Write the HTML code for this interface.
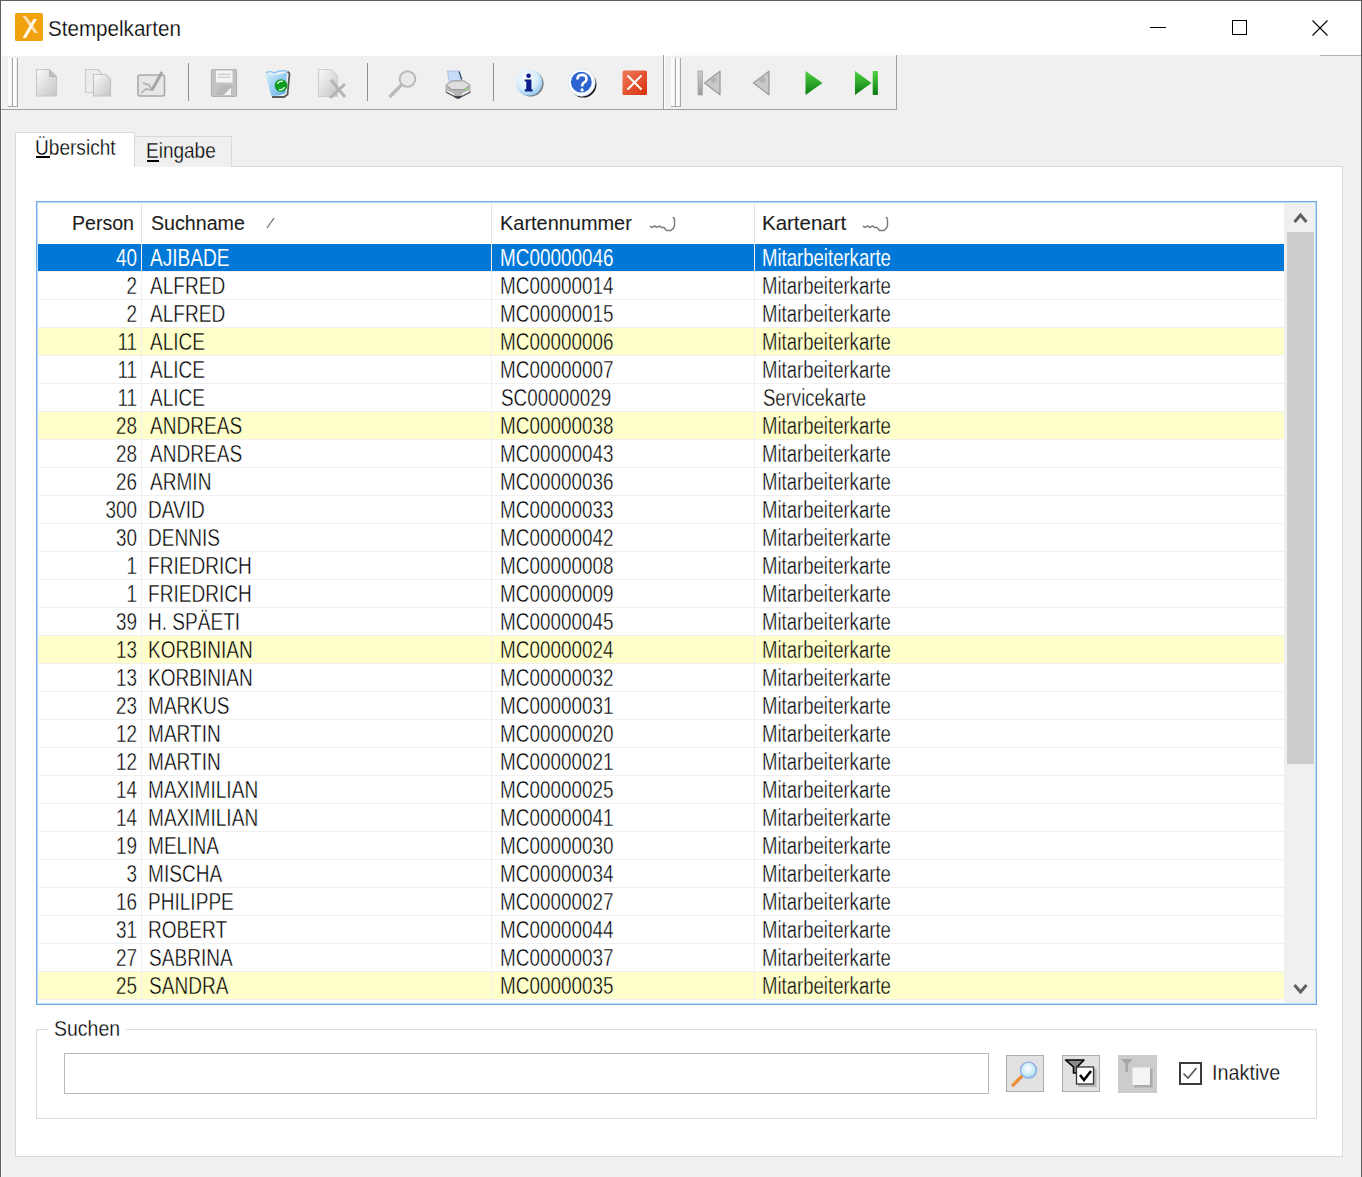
<!DOCTYPE html>
<html><head><meta charset="utf-8"><title>Stempelkarten</title>
<style>
html,body{margin:0;padding:0}
body{width:1362px;height:1177px;overflow:hidden;position:relative;background:#f0f0f0;font-family:"Liberation Sans",sans-serif}
.r{position:absolute;display:block}
.t{position:absolute;white-space:nowrap;line-height:1;}
</style></head><body>
<div class="r" style="left:0px;top:0px;width:1362px;height:1px;background:#5f5f5f"></div>
<div class="r" style="left:0px;top:0px;width:1px;height:1177px;background:#5f5f5f"></div>
<div class="r" style="left:1361px;top:0px;width:1px;height:1177px;background:#5f5f5f"></div>
<div class="r" style="left:1px;top:1px;width:1360px;height:54px;background:#fff"></div>
<div class="r" style="left:1px;top:55px;width:1px;height:1122px;background:#fafafa"></div>
<svg class="r" style="left:15px;top:13px" width="29" height="29" viewBox="0 0 29 29">
<rect x="0" y="0" width="28" height="28" rx="1.5" fill="#f0a30f"/>
<path d="M7.5 3 L11 3 L23 20 L19.5 20 Z" fill="#fce0b4"/>
<path d="M18.5 6 L22 6 L11 25 L7.5 25 Z" fill="#fff7ec"/>
</svg>
<div class="t" style="left:47.57px;top:18.26px;font-size:22.61px;font-weight:normal;color:#000;transform:scaleX(0.9112);transform-origin:0 0;-webkit-text-stroke:0.25px #fff">Stempelkarten</div>
<div class="r" style="left:1150px;top:27px;width:16px;height:1px;background:#000"></div>
<div class="r" style="left:1232px;top:20px;width:15px;height:15px;border:1px solid #000;box-sizing:border-box"></div>
<svg class="r" style="left:1311px;top:19px" width="18" height="18" viewBox="0 0 18 18">
<path d="M1.5 1.5 L16.5 16.5 M16.5 1.5 L1.5 16.5" stroke="#000" stroke-width="1.1"/></svg>
<div class="r" style="left:1px;top:55px;width:1360px;height:1px;background:#f0f0f0"></div>
<div class="r" style="left:1320px;top:55px;width:41px;height:1px;background:#b4b4b4"></div>
<div class="r" style="left:1px;top:55px;width:662px;height:1px;background:#fff"></div>
<div class="r" style="left:665px;top:55px;width:231px;height:1px;background:#fafafa"></div>
<div class="r" style="left:2px;top:108px;width:661px;height:1px;background:#f0f0f0"></div>
<div class="r" style="left:1px;top:109px;width:896px;height:1px;background:#a0a0a0"></div>
<div class="r" style="left:663px;top:55px;width:1px;height:55px;background:#a0a0a0"></div>
<div class="r" style="left:664px;top:55px;width:1px;height:54px;background:#fff"></div>
<div class="r" style="left:896px;top:55px;width:1px;height:55px;background:#a0a0a0"></div>
<div class="r" style="left:8px;top:58px;width:3px;height:48px;background:#fbfbfb"></div>
<div class="r" style="left:12px;top:58px;width:1px;height:49px;background:#a8a8a8"></div>
<div class="r" style="left:13px;top:58px;width:3px;height:48px;background:#fdfdfd"></div>
<div class="r" style="left:17px;top:58px;width:1px;height:49px;background:#a8a8a8"></div>
<div class="r" style="left:8px;top:106px;width:10px;height:1px;background:#a8a8a8"></div>
<div class="r" style="left:671px;top:58px;width:3px;height:48px;background:#fbfbfb"></div>
<div class="r" style="left:675px;top:58px;width:1px;height:49px;background:#a8a8a8"></div>
<div class="r" style="left:676px;top:58px;width:3px;height:48px;background:#fdfdfd"></div>
<div class="r" style="left:680px;top:58px;width:1px;height:49px;background:#a8a8a8"></div>
<div class="r" style="left:671px;top:106px;width:10px;height:1px;background:#a8a8a8"></div>
<div class="r" style="left:188px;top:63px;width:1px;height:38px;background:#8f8f8f"></div>
<div class="r" style="left:367px;top:63px;width:1px;height:38px;background:#8f8f8f"></div>
<div class="r" style="left:493px;top:63px;width:1px;height:38px;background:#8f8f8f"></div>

<svg class="r" style="left:30px;top:64px" width="630" height="38" viewBox="30 64 630 38">
<defs>
<linearGradient id="gpage" x1="0" y1="0" x2="1" y2="1"><stop offset="0" stop-color="#fafafa"/><stop offset="1" stop-color="#c4c4c4"/></linearGradient>
<linearGradient id="gbin" x1="0" y1="0" x2="1" y2="1"><stop offset="0" stop-color="#d8f4fb"/><stop offset="1" stop-color="#5aa8ea"/></linearGradient>
<radialGradient id="ginfo" cx="0.4" cy="0.35" r="0.7"><stop offset="0" stop-color="#ffffff"/><stop offset="0.6" stop-color="#d6ecfb"/><stop offset="1" stop-color="#8cc2ea"/></radialGradient>
<linearGradient id="gred" x1="0" y1="0" x2="1" y2="1"><stop offset="0" stop-color="#f07a5a"/><stop offset="1" stop-color="#d8300c"/></linearGradient>
</defs>
<!-- new doc -->
<path d="M36.5 69.5 H49.5 L56.5 76.5 V96 H36.5 Z" fill="url(#gpage)" stroke="#c8c8c8" stroke-width="1.2"/>
<path d="M49.5 69.5 V76.5 H56.5" fill="#bdbdbd" stroke="#b5b5b5" stroke-width="1"/>
<!-- copy -->
<path d="M85.5 69.5 H98 L101 72.5 V92.5 H85.5 Z" fill="#ececec" stroke="#cdcdcd" stroke-width="1.2"/>
<path d="M93.5 74.5 H106 L110.5 79 V96 H93.5 Z" fill="url(#gpage)" stroke="#c3c3c3" stroke-width="1.2"/>
<!-- edit -->
<rect x="138" y="75" width="26.5" height="21" rx="2" fill="#e6e6e6" stroke="#a9a9a9" stroke-width="1.6"/>
<path d="M141 93 L146 89 L152 90 L149 85 L143 83" fill="none" stroke="#aaaaaa" stroke-width="1.4"/>
<path d="M152 90 L162 72" stroke="#a5a5a5" stroke-width="3"/>
<!-- floppy -->
<path d="M213.5 69.5 H235 Q236.5 69.5 236.5 71 V95 Q236.5 96.5 235 96.5 H213.5 Q211.5 96.5 211.5 94.5 V71.5 Q211.5 69.5 213.5 69.5 Z" fill="#c3c3c3" stroke="#b2b2b2" stroke-width="1.2"/>
<rect x="216" y="70.5" width="16.5" height="12" fill="#f5f5f5"/>
<rect x="218" y="73.5" width="12.5" height="1.6" fill="#cfcfcf"/>
<rect x="218" y="76.5" width="12.5" height="1.6" fill="#d6d6d6"/>
<path d="M215 95 L222 85 H232 V95 Z" fill="#b9b9b9"/>
<path d="M224 95 L231 87.5 V95 Z" fill="#f7f7f7"/>
<!-- recycle bin -->
<path d="M265.5 73 Q276 77.5 287 72 L285.5 93 Q280 96.5 271 95.5 Z" fill="url(#gbin)"/>
<path d="M266 73 Q270 70 274 73 Q280 70 287 71" fill="none" stroke="#8cc8f5" stroke-width="1.6"/>
<path d="M287.5 71.5 L289.5 73.5 L287.5 94.5 L284 97 L272 97" fill="none" stroke="#5a5a5a" stroke-width="1.8"/>
<circle cx="281" cy="85.5" r="6.3" fill="#0e9b22"/>
<path d="M277.5 84 Q279 80.5 283 81.5 M284.5 87 Q283 90.5 279 89.5" fill="none" stroke="#d8f6d8" stroke-width="1.3"/>
<!-- delete doc -->
<path d="M318.5 69.5 H331 L337.5 76 V96.5 H318.5 Z" fill="url(#gpage)" stroke="#cfcfcf" stroke-width="1.2"/>
<path d="M331 80 L345 97 M345 84 L330 98" stroke="#b5b5b5" stroke-width="3"/>
<!-- magnifier -->
<circle cx="407.5" cy="79" r="7.8" fill="#e9e9e9" stroke="#b9b9b9" stroke-width="2"/>
<path d="M401 85.5 L390.5 96" stroke="#b9b9b9" stroke-width="3.5" stroke-linecap="round"/>
<!-- printer -->
<path d="M447.5 71 H459 L461.5 80 L449 81.5 Z" fill="#c4dcf6" stroke="#aab8e0" stroke-width="0.8"/>
<path d="M459 71.5 L461.8 79.5" stroke="#334466" stroke-width="1.2"/>
<path d="M445.5 85 L452 80.5 H464 L470.5 85 V92 L458 98.5 L445.5 92 Z" fill="#b4b4b4"/>
<path d="M446 85 L452 81 H464 L470 85 L464 89.5 H452 Z" fill="#dedede" stroke="#8e8e8e" stroke-width="0.8"/>
<path d="M447 91 L454 94.5 M462 94.5 L469 91" stroke="#f4f4f4" stroke-width="1.6"/>
<path d="M446 92 L458 98.5 L470.5 92" fill="none" stroke="#555" stroke-width="1.4"/>
<path d="M455 97 L461 97" stroke="#2a3440" stroke-width="1.6"/>
<rect x="465" y="88" width="2.5" height="2" fill="#8fd66a"/>
<!-- info -->
<circle cx="530.6" cy="83.6" r="13" fill="#4a4a4a" opacity="0.75"/>
<circle cx="529.2" cy="82.6" r="13.2" fill="url(#ginfo)"/>
<circle cx="528.6" cy="75.8" r="2.3" fill="#0c1f8a"/>
<path d="M524.6 79.4 H531.4 V89.2 H532.6 V91.4 H524.8 V89.2 H526.3 V81.6 H524.6 Z" fill="#0c1f8a"/>
<!-- help -->
<circle cx="583.2" cy="84.4" r="13.2" fill="#1a1a1a"/>
<circle cx="581.6" cy="82.6" r="13.6" fill="#f7fbff" stroke="#d6e3f3" stroke-width="0.8"/>
<circle cx="581.3" cy="82.2" r="10.4" fill="#2c63cf"/>
<path d="M577.4 79.6 Q577.4 74.9 581.9 74.9 Q586.5 74.9 586.5 78.9 Q586.5 81.3 583.6 82.9 Q582.1 83.8 582.1 86.6" fill="none" stroke="#fff" stroke-width="2.6"/>
<circle cx="582.1" cy="89.9" r="1.6" fill="#fff"/>
<!-- close -->
<rect x="622.5" y="70.5" width="24.5" height="24.5" rx="1.5" fill="url(#gred)"/>
<path d="M627.5 75.5 L641.5 89.5 M641.5 75.5 L627.5 89.5" stroke="#fff" stroke-width="2"/>
</svg>
<svg class="r" style="left:690px;top:64px" width="200" height="38" viewBox="690 64 200 38">
<defs>
<linearGradient id="ggr" x1="0" y1="0" x2="0" y2="1"><stop offset="0" stop-color="#d0d0d0"/><stop offset="1" stop-color="#9a9a9a"/></linearGradient>
<linearGradient id="ggn" x1="0" y1="0" x2="0" y2="1"><stop offset="0" stop-color="#4fd23f"/><stop offset="1" stop-color="#0a7a12"/></linearGradient>
</defs>
<rect x="698" y="71" width="4.5" height="24" fill="url(#ggr)" stroke="#a8a8a8" stroke-width="0.8"/>
<path d="M720 71.2 V94.8 L704.5 83 Z" fill="#c9c9c9" stroke="#9c9c9c" stroke-width="1.3" stroke-linejoin="round"/>
<circle cx="713.5" cy="80" r="3" fill="#b5b5b5"/>
<path d="M769 71.2 V94.8 L753.5 83 Z" fill="#c9c9c9" stroke="#9c9c9c" stroke-width="1.3" stroke-linejoin="round"/>
<circle cx="762.5" cy="80" r="3" fill="#b5b5b5"/>
<path d="M805.5 71 V95 L822.5 83 Z" fill="url(#ggn)"/>
<path d="M855 71 V95 L871.5 83 Z" fill="url(#ggn)"/>
<rect x="872.7" y="71" width="5.2" height="24" rx="0.8" fill="url(#ggn)"/>
</svg>

<div class="r" style="left:15px;top:166px;width:1328px;height:991px;background:#fff;border:1px solid #d9d9d9;box-sizing:border-box"></div>
<div class="r" style="left:134px;top:136px;width:98px;height:31px;background:#f0f0f0;border:1px solid #d9d9d9;border-bottom:none;box-sizing:border-box"></div>
<div class="r" style="left:15px;top:132px;width:120px;height:35px;background:#fff;border:1px solid #d9d9d9;border-bottom:none;box-sizing:border-box"></div>
<div class="t" style="left:34.97px;top:136.60px;font-size:21.74px;font-weight:normal;color:#000;transform:scaleX(0.8778);transform-origin:0 0;-webkit-text-stroke:0.3px #fff">Übersicht</div>
<div class="r" style="left:36px;top:156px;width:14px;height:2px;background:#000"></div>
<div class="t" style="left:145.98px;top:141.04px;font-size:21.45px;font-weight:normal;color:#000;transform:scaleX(0.8863);transform-origin:0 0;-webkit-text-stroke:0.3px #f0f0f0">Eingabe</div>
<div class="r" style="left:147px;top:160px;width:12px;height:2px;background:#000"></div>
<div class="r" style="left:36px;top:201px;width:1281px;height:804px;background:#fff;border:1px solid #70aae8;box-sizing:border-box"></div>
<div class="r" style="left:37px;top:202px;width:1279px;height:802px;border:1px solid #c2dcf6;box-sizing:border-box;z-index:5"></div>
<div class="r" style="left:141px;top:202px;width:1px;height:42px;background:#e3e3e3"></div>
<div class="r" style="left:491px;top:202px;width:1px;height:42px;background:#e3e3e3"></div>
<div class="r" style="left:754px;top:202px;width:1px;height:42px;background:#e3e3e3"></div>
<div class="t" style="left:-465.66px;width:600px;text-align:right;top:213.32px;font-size:20.29px;font-weight:normal;color:#1c1c1c;transform:scaleX(0.9661);transform-origin:100% 0;-webkit-text-stroke:0.1px #1c1c1c">Person</div>
<div class="t" style="left:150.62px;top:212.78px;font-size:20.58px;font-weight:normal;color:#1c1c1c;transform:scaleX(0.9542);transform-origin:0 0;-webkit-text-stroke:0.1px #1c1c1c">Suchname</div>
<div class="t" style="left:500.40px;top:213.02px;font-size:20.29px;font-weight:normal;color:#1c1c1c;transform:scaleX(0.9827);transform-origin:0 0;-webkit-text-stroke:0.1px #1c1c1c">Kartennummer</div>
<div class="t" style="left:761.86px;top:213.02px;font-size:20.29px;font-weight:normal;color:#1c1c1c;transform:scaleX(1.0090);transform-origin:0 0;-webkit-text-stroke:0.1px #1c1c1c">Kartenart</div>
<svg class="r" style="left:264px;top:215px" width="14" height="16"><path d="M3 13 L10 3" stroke="#707070" stroke-width="1.3"/></svg>
<svg class="r" style="left:649px;top:216px" width="28" height="17"><path d="M1 10 L2.5 11.5 L4.5 10.5 L6 10 L7.5 11.5 L9.5 10.5 L11 10 L12.5 11.5 L15 11.5 L17.5 14.5 L22 14.5 L24.5 12 L25.5 9.5 V3 L24 1" fill="none" stroke="#7a7a7a" stroke-width="1.4"/></svg>
<svg class="r" style="left:862px;top:216px" width="28" height="17"><path d="M1 10 L2.5 11.5 L4.5 10.5 L6 10 L7.5 11.5 L9.5 10.5 L11 10 L12.5 11.5 L15 11.5 L17.5 14.5 L22 14.5 L24.5 12 L25.5 9.5 V3 L24 1" fill="none" stroke="#7a7a7a" stroke-width="1.4"/></svg>
<div class="r" style="left:37px;top:244px;width:104px;height:27px;background:#0078d7"></div>
<div class="r" style="left:142px;top:244px;width:349px;height:27px;background:#0078d7"></div>
<div class="r" style="left:492px;top:244px;width:262px;height:27px;background:#0078d7"></div>
<div class="r" style="left:755px;top:244px;width:529px;height:27px;background:#0078d7"></div>
<div class="r" style="left:37px;top:271px;width:1247px;height:1px;background:#f0f0f0"></div>
<div class="r" style="left:141px;top:244px;width:1px;height:27px;background:#f0f0f0"></div>
<div class="r" style="left:491px;top:244px;width:1px;height:27px;background:#f0f0f0"></div>
<div class="r" style="left:754px;top:244px;width:1px;height:27px;background:#f0f0f0"></div>
<div class="t" style="left:-463.19px;width:600px;text-align:right;top:245.98px;font-size:23.77px;font-weight:normal;color:#fff;transform:scaleX(0.7951);transform-origin:100% 0;-webkit-text-stroke:0.1px #0078d7">40</div>
<div class="t" style="left:150.00px;top:245.98px;font-size:23.77px;font-weight:normal;color:#fff;transform:scaleX(0.8020);transform-origin:0 0;-webkit-text-stroke:0.1px #0078d7">AJIBADE</div>
<div class="t" style="left:499.99px;top:245.98px;font-size:23.77px;font-weight:normal;color:#fff;transform:scaleX(0.7951);transform-origin:0 0;-webkit-text-stroke:0.1px #0078d7">MC00000046</div>
<div class="t" style="left:762.32px;top:245.98px;font-size:23.77px;font-weight:normal;color:#fff;transform:scaleX(0.7805);transform-origin:0 0;-webkit-text-stroke:0.1px #0078d7">Mitarbeiterkarte</div>
<div class="r" style="left:37px;top:299px;width:1247px;height:1px;background:#f0f0f0"></div>
<div class="r" style="left:141px;top:272px;width:1px;height:27px;background:#f0f0f0"></div>
<div class="r" style="left:491px;top:272px;width:1px;height:27px;background:#f0f0f0"></div>
<div class="r" style="left:754px;top:272px;width:1px;height:27px;background:#f0f0f0"></div>
<div class="t" style="left:-462.93px;width:600px;text-align:right;top:273.98px;font-size:23.77px;font-weight:normal;color:#000;transform:scaleX(0.7951);transform-origin:100% 0;-webkit-text-stroke:0.4px #fff">2</div>
<div class="t" style="left:150.00px;top:273.98px;font-size:23.77px;font-weight:normal;color:#000;transform:scaleX(0.8020);transform-origin:0 0;-webkit-text-stroke:0.4px #fff">ALFRED</div>
<div class="t" style="left:499.99px;top:273.98px;font-size:23.77px;font-weight:normal;color:#000;transform:scaleX(0.7951);transform-origin:0 0;-webkit-text-stroke:0.4px #fff">MC00000014</div>
<div class="t" style="left:762.32px;top:273.98px;font-size:23.77px;font-weight:normal;color:#000;transform:scaleX(0.7805);transform-origin:0 0;-webkit-text-stroke:0.4px #fff">Mitarbeiterkarte</div>
<div class="r" style="left:37px;top:327px;width:1247px;height:1px;background:#f0f0f0"></div>
<div class="r" style="left:141px;top:300px;width:1px;height:27px;background:#f0f0f0"></div>
<div class="r" style="left:491px;top:300px;width:1px;height:27px;background:#f0f0f0"></div>
<div class="r" style="left:754px;top:300px;width:1px;height:27px;background:#f0f0f0"></div>
<div class="t" style="left:-462.93px;width:600px;text-align:right;top:301.98px;font-size:23.77px;font-weight:normal;color:#000;transform:scaleX(0.7951);transform-origin:100% 0;-webkit-text-stroke:0.4px #fff">2</div>
<div class="t" style="left:150.00px;top:301.98px;font-size:23.77px;font-weight:normal;color:#000;transform:scaleX(0.8020);transform-origin:0 0;-webkit-text-stroke:0.4px #fff">ALFRED</div>
<div class="t" style="left:499.99px;top:301.98px;font-size:23.77px;font-weight:normal;color:#000;transform:scaleX(0.7951);transform-origin:0 0;-webkit-text-stroke:0.4px #fff">MC00000015</div>
<div class="t" style="left:762.32px;top:301.98px;font-size:23.77px;font-weight:normal;color:#000;transform:scaleX(0.7805);transform-origin:0 0;-webkit-text-stroke:0.4px #fff">Mitarbeiterkarte</div>
<div class="r" style="left:37px;top:328px;width:104px;height:27px;background:#ffffcc"></div>
<div class="r" style="left:142px;top:328px;width:349px;height:27px;background:#ffffcc"></div>
<div class="r" style="left:492px;top:328px;width:262px;height:27px;background:#ffffcc"></div>
<div class="r" style="left:755px;top:328px;width:529px;height:27px;background:#ffffcc"></div>
<div class="r" style="left:37px;top:355px;width:1247px;height:1px;background:#f0f0f0"></div>
<div class="r" style="left:141px;top:328px;width:1px;height:27px;background:#f0f0f0"></div>
<div class="r" style="left:491px;top:328px;width:1px;height:27px;background:#f0f0f0"></div>
<div class="r" style="left:754px;top:328px;width:1px;height:27px;background:#f0f0f0"></div>
<div class="t" style="left:-462.89px;width:600px;text-align:right;top:329.98px;font-size:23.77px;font-weight:normal;color:#000;transform:scaleX(0.7951);transform-origin:100% 0;-webkit-text-stroke:0.4px #ffffcc">11</div>
<div class="t" style="left:150.00px;top:329.98px;font-size:23.77px;font-weight:normal;color:#000;transform:scaleX(0.8020);transform-origin:0 0;-webkit-text-stroke:0.4px #ffffcc">ALICE</div>
<div class="t" style="left:499.99px;top:329.98px;font-size:23.77px;font-weight:normal;color:#000;transform:scaleX(0.7951);transform-origin:0 0;-webkit-text-stroke:0.4px #ffffcc">MC00000006</div>
<div class="t" style="left:762.32px;top:329.98px;font-size:23.77px;font-weight:normal;color:#000;transform:scaleX(0.7805);transform-origin:0 0;-webkit-text-stroke:0.4px #ffffcc">Mitarbeiterkarte</div>
<div class="r" style="left:37px;top:383px;width:1247px;height:1px;background:#f0f0f0"></div>
<div class="r" style="left:141px;top:356px;width:1px;height:27px;background:#f0f0f0"></div>
<div class="r" style="left:491px;top:356px;width:1px;height:27px;background:#f0f0f0"></div>
<div class="r" style="left:754px;top:356px;width:1px;height:27px;background:#f0f0f0"></div>
<div class="t" style="left:-462.89px;width:600px;text-align:right;top:357.98px;font-size:23.77px;font-weight:normal;color:#000;transform:scaleX(0.7951);transform-origin:100% 0;-webkit-text-stroke:0.4px #fff">11</div>
<div class="t" style="left:150.00px;top:357.98px;font-size:23.77px;font-weight:normal;color:#000;transform:scaleX(0.8020);transform-origin:0 0;-webkit-text-stroke:0.4px #fff">ALICE</div>
<div class="t" style="left:499.99px;top:357.98px;font-size:23.77px;font-weight:normal;color:#000;transform:scaleX(0.7951);transform-origin:0 0;-webkit-text-stroke:0.4px #fff">MC00000007</div>
<div class="t" style="left:762.32px;top:357.98px;font-size:23.77px;font-weight:normal;color:#000;transform:scaleX(0.7805);transform-origin:0 0;-webkit-text-stroke:0.4px #fff">Mitarbeiterkarte</div>
<div class="r" style="left:37px;top:411px;width:1247px;height:1px;background:#f0f0f0"></div>
<div class="r" style="left:141px;top:384px;width:1px;height:27px;background:#f0f0f0"></div>
<div class="r" style="left:491px;top:384px;width:1px;height:27px;background:#f0f0f0"></div>
<div class="r" style="left:754px;top:384px;width:1px;height:27px;background:#f0f0f0"></div>
<div class="t" style="left:-462.89px;width:600px;text-align:right;top:385.98px;font-size:23.77px;font-weight:normal;color:#000;transform:scaleX(0.7951);transform-origin:100% 0;-webkit-text-stroke:0.4px #fff">11</div>
<div class="t" style="left:150.00px;top:385.98px;font-size:23.77px;font-weight:normal;color:#000;transform:scaleX(0.8020);transform-origin:0 0;-webkit-text-stroke:0.4px #fff">ALICE</div>
<div class="t" style="left:500.56px;top:385.98px;font-size:23.77px;font-weight:normal;color:#000;transform:scaleX(0.7951);transform-origin:0 0;-webkit-text-stroke:0.4px #fff">SC00000029</div>
<div class="t" style="left:762.87px;top:385.98px;font-size:23.77px;font-weight:normal;color:#000;transform:scaleX(0.7805);transform-origin:0 0;-webkit-text-stroke:0.4px #fff">Servicekarte</div>
<div class="r" style="left:37px;top:412px;width:104px;height:27px;background:#ffffcc"></div>
<div class="r" style="left:142px;top:412px;width:349px;height:27px;background:#ffffcc"></div>
<div class="r" style="left:492px;top:412px;width:262px;height:27px;background:#ffffcc"></div>
<div class="r" style="left:755px;top:412px;width:529px;height:27px;background:#ffffcc"></div>
<div class="r" style="left:37px;top:439px;width:1247px;height:1px;background:#f0f0f0"></div>
<div class="r" style="left:141px;top:412px;width:1px;height:27px;background:#f0f0f0"></div>
<div class="r" style="left:491px;top:412px;width:1px;height:27px;background:#f0f0f0"></div>
<div class="r" style="left:754px;top:412px;width:1px;height:27px;background:#f0f0f0"></div>
<div class="t" style="left:-463.00px;width:600px;text-align:right;top:413.98px;font-size:23.77px;font-weight:normal;color:#000;transform:scaleX(0.7951);transform-origin:100% 0;-webkit-text-stroke:0.4px #ffffcc">28</div>
<div class="t" style="left:150.00px;top:413.98px;font-size:23.77px;font-weight:normal;color:#000;transform:scaleX(0.8020);transform-origin:0 0;-webkit-text-stroke:0.4px #ffffcc">ANDREAS</div>
<div class="t" style="left:499.99px;top:413.98px;font-size:23.77px;font-weight:normal;color:#000;transform:scaleX(0.7951);transform-origin:0 0;-webkit-text-stroke:0.4px #ffffcc">MC00000038</div>
<div class="t" style="left:762.32px;top:413.98px;font-size:23.77px;font-weight:normal;color:#000;transform:scaleX(0.7805);transform-origin:0 0;-webkit-text-stroke:0.4px #ffffcc">Mitarbeiterkarte</div>
<div class="r" style="left:37px;top:467px;width:1247px;height:1px;background:#f0f0f0"></div>
<div class="r" style="left:141px;top:440px;width:1px;height:27px;background:#f0f0f0"></div>
<div class="r" style="left:491px;top:440px;width:1px;height:27px;background:#f0f0f0"></div>
<div class="r" style="left:754px;top:440px;width:1px;height:27px;background:#f0f0f0"></div>
<div class="t" style="left:-463.00px;width:600px;text-align:right;top:441.98px;font-size:23.77px;font-weight:normal;color:#000;transform:scaleX(0.7951);transform-origin:100% 0;-webkit-text-stroke:0.4px #fff">28</div>
<div class="t" style="left:150.00px;top:441.98px;font-size:23.77px;font-weight:normal;color:#000;transform:scaleX(0.8020);transform-origin:0 0;-webkit-text-stroke:0.4px #fff">ANDREAS</div>
<div class="t" style="left:499.99px;top:441.98px;font-size:23.77px;font-weight:normal;color:#000;transform:scaleX(0.7951);transform-origin:0 0;-webkit-text-stroke:0.4px #fff">MC00000043</div>
<div class="t" style="left:762.32px;top:441.98px;font-size:23.77px;font-weight:normal;color:#000;transform:scaleX(0.7805);transform-origin:0 0;-webkit-text-stroke:0.4px #fff">Mitarbeiterkarte</div>
<div class="r" style="left:37px;top:495px;width:1247px;height:1px;background:#f0f0f0"></div>
<div class="r" style="left:141px;top:468px;width:1px;height:27px;background:#f0f0f0"></div>
<div class="r" style="left:491px;top:468px;width:1px;height:27px;background:#f0f0f0"></div>
<div class="r" style="left:754px;top:468px;width:1px;height:27px;background:#f0f0f0"></div>
<div class="t" style="left:-463.00px;width:600px;text-align:right;top:469.98px;font-size:23.77px;font-weight:normal;color:#000;transform:scaleX(0.7951);transform-origin:100% 0;-webkit-text-stroke:0.4px #fff">26</div>
<div class="t" style="left:150.00px;top:469.98px;font-size:23.77px;font-weight:normal;color:#000;transform:scaleX(0.8020);transform-origin:0 0;-webkit-text-stroke:0.4px #fff">ARMIN</div>
<div class="t" style="left:499.99px;top:469.98px;font-size:23.77px;font-weight:normal;color:#000;transform:scaleX(0.7951);transform-origin:0 0;-webkit-text-stroke:0.4px #fff">MC00000036</div>
<div class="t" style="left:762.32px;top:469.98px;font-size:23.77px;font-weight:normal;color:#000;transform:scaleX(0.7805);transform-origin:0 0;-webkit-text-stroke:0.4px #fff">Mitarbeiterkarte</div>
<div class="r" style="left:37px;top:523px;width:1247px;height:1px;background:#f0f0f0"></div>
<div class="r" style="left:141px;top:496px;width:1px;height:27px;background:#f0f0f0"></div>
<div class="r" style="left:491px;top:496px;width:1px;height:27px;background:#f0f0f0"></div>
<div class="r" style="left:754px;top:496px;width:1px;height:27px;background:#f0f0f0"></div>
<div class="t" style="left:-463.08px;width:600px;text-align:right;top:497.98px;font-size:23.77px;font-weight:normal;color:#000;transform:scaleX(0.7951);transform-origin:100% 0;-webkit-text-stroke:0.4px #fff">300</div>
<div class="t" style="left:148.48px;top:497.98px;font-size:23.77px;font-weight:normal;color:#000;transform:scaleX(0.8020);transform-origin:0 0;-webkit-text-stroke:0.4px #fff">DAVID</div>
<div class="t" style="left:499.99px;top:497.98px;font-size:23.77px;font-weight:normal;color:#000;transform:scaleX(0.7951);transform-origin:0 0;-webkit-text-stroke:0.4px #fff">MC00000033</div>
<div class="t" style="left:762.32px;top:497.98px;font-size:23.77px;font-weight:normal;color:#000;transform:scaleX(0.7805);transform-origin:0 0;-webkit-text-stroke:0.4px #fff">Mitarbeiterkarte</div>
<div class="r" style="left:37px;top:551px;width:1247px;height:1px;background:#f0f0f0"></div>
<div class="r" style="left:141px;top:524px;width:1px;height:27px;background:#f0f0f0"></div>
<div class="r" style="left:491px;top:524px;width:1px;height:27px;background:#f0f0f0"></div>
<div class="r" style="left:754px;top:524px;width:1px;height:27px;background:#f0f0f0"></div>
<div class="t" style="left:-463.19px;width:600px;text-align:right;top:525.98px;font-size:23.77px;font-weight:normal;color:#000;transform:scaleX(0.7951);transform-origin:100% 0;-webkit-text-stroke:0.4px #fff">30</div>
<div class="t" style="left:148.48px;top:525.98px;font-size:23.77px;font-weight:normal;color:#000;transform:scaleX(0.8020);transform-origin:0 0;-webkit-text-stroke:0.4px #fff">DENNIS</div>
<div class="t" style="left:499.99px;top:525.98px;font-size:23.77px;font-weight:normal;color:#000;transform:scaleX(0.7951);transform-origin:0 0;-webkit-text-stroke:0.4px #fff">MC00000042</div>
<div class="t" style="left:762.32px;top:525.98px;font-size:23.77px;font-weight:normal;color:#000;transform:scaleX(0.7805);transform-origin:0 0;-webkit-text-stroke:0.4px #fff">Mitarbeiterkarte</div>
<div class="r" style="left:37px;top:579px;width:1247px;height:1px;background:#f0f0f0"></div>
<div class="r" style="left:141px;top:552px;width:1px;height:27px;background:#f0f0f0"></div>
<div class="r" style="left:491px;top:552px;width:1px;height:27px;background:#f0f0f0"></div>
<div class="r" style="left:754px;top:552px;width:1px;height:27px;background:#f0f0f0"></div>
<div class="t" style="left:-462.93px;width:600px;text-align:right;top:553.98px;font-size:23.77px;font-weight:normal;color:#000;transform:scaleX(0.7951);transform-origin:100% 0;-webkit-text-stroke:0.4px #fff">1</div>
<div class="t" style="left:148.48px;top:553.98px;font-size:23.77px;font-weight:normal;color:#000;transform:scaleX(0.8020);transform-origin:0 0;-webkit-text-stroke:0.4px #fff">FRIEDRICH</div>
<div class="t" style="left:499.99px;top:553.98px;font-size:23.77px;font-weight:normal;color:#000;transform:scaleX(0.7951);transform-origin:0 0;-webkit-text-stroke:0.4px #fff">MC00000008</div>
<div class="t" style="left:762.32px;top:553.98px;font-size:23.77px;font-weight:normal;color:#000;transform:scaleX(0.7805);transform-origin:0 0;-webkit-text-stroke:0.4px #fff">Mitarbeiterkarte</div>
<div class="r" style="left:37px;top:607px;width:1247px;height:1px;background:#f0f0f0"></div>
<div class="r" style="left:141px;top:580px;width:1px;height:27px;background:#f0f0f0"></div>
<div class="r" style="left:491px;top:580px;width:1px;height:27px;background:#f0f0f0"></div>
<div class="r" style="left:754px;top:580px;width:1px;height:27px;background:#f0f0f0"></div>
<div class="t" style="left:-462.93px;width:600px;text-align:right;top:581.98px;font-size:23.77px;font-weight:normal;color:#000;transform:scaleX(0.7951);transform-origin:100% 0;-webkit-text-stroke:0.4px #fff">1</div>
<div class="t" style="left:148.48px;top:581.98px;font-size:23.77px;font-weight:normal;color:#000;transform:scaleX(0.8020);transform-origin:0 0;-webkit-text-stroke:0.4px #fff">FRIEDRICH</div>
<div class="t" style="left:499.99px;top:581.98px;font-size:23.77px;font-weight:normal;color:#000;transform:scaleX(0.7951);transform-origin:0 0;-webkit-text-stroke:0.4px #fff">MC00000009</div>
<div class="t" style="left:762.32px;top:581.98px;font-size:23.77px;font-weight:normal;color:#000;transform:scaleX(0.7805);transform-origin:0 0;-webkit-text-stroke:0.4px #fff">Mitarbeiterkarte</div>
<div class="r" style="left:37px;top:635px;width:1247px;height:1px;background:#f0f0f0"></div>
<div class="r" style="left:141px;top:608px;width:1px;height:27px;background:#f0f0f0"></div>
<div class="r" style="left:491px;top:608px;width:1px;height:27px;background:#f0f0f0"></div>
<div class="r" style="left:754px;top:608px;width:1px;height:27px;background:#f0f0f0"></div>
<div class="t" style="left:-463.00px;width:600px;text-align:right;top:609.98px;font-size:23.77px;font-weight:normal;color:#000;transform:scaleX(0.7951);transform-origin:100% 0;-webkit-text-stroke:0.4px #fff">39</div>
<div class="t" style="left:148.48px;top:609.98px;font-size:23.77px;font-weight:normal;color:#000;transform:scaleX(0.8020);transform-origin:0 0;-webkit-text-stroke:0.4px #fff">H. SPÄETI</div>
<div class="t" style="left:499.99px;top:609.98px;font-size:23.77px;font-weight:normal;color:#000;transform:scaleX(0.7951);transform-origin:0 0;-webkit-text-stroke:0.4px #fff">MC00000045</div>
<div class="t" style="left:762.32px;top:609.98px;font-size:23.77px;font-weight:normal;color:#000;transform:scaleX(0.7805);transform-origin:0 0;-webkit-text-stroke:0.4px #fff">Mitarbeiterkarte</div>
<div class="r" style="left:37px;top:636px;width:104px;height:27px;background:#ffffcc"></div>
<div class="r" style="left:142px;top:636px;width:349px;height:27px;background:#ffffcc"></div>
<div class="r" style="left:492px;top:636px;width:262px;height:27px;background:#ffffcc"></div>
<div class="r" style="left:755px;top:636px;width:529px;height:27px;background:#ffffcc"></div>
<div class="r" style="left:37px;top:663px;width:1247px;height:1px;background:#f0f0f0"></div>
<div class="r" style="left:141px;top:636px;width:1px;height:27px;background:#f0f0f0"></div>
<div class="r" style="left:491px;top:636px;width:1px;height:27px;background:#f0f0f0"></div>
<div class="r" style="left:754px;top:636px;width:1px;height:27px;background:#f0f0f0"></div>
<div class="t" style="left:-463.00px;width:600px;text-align:right;top:637.98px;font-size:23.77px;font-weight:normal;color:#000;transform:scaleX(0.7951);transform-origin:100% 0;-webkit-text-stroke:0.4px #ffffcc">13</div>
<div class="t" style="left:148.48px;top:637.98px;font-size:23.77px;font-weight:normal;color:#000;transform:scaleX(0.8020);transform-origin:0 0;-webkit-text-stroke:0.4px #ffffcc">KORBINIAN</div>
<div class="t" style="left:499.99px;top:637.98px;font-size:23.77px;font-weight:normal;color:#000;transform:scaleX(0.7951);transform-origin:0 0;-webkit-text-stroke:0.4px #ffffcc">MC00000024</div>
<div class="t" style="left:762.32px;top:637.98px;font-size:23.77px;font-weight:normal;color:#000;transform:scaleX(0.7805);transform-origin:0 0;-webkit-text-stroke:0.4px #ffffcc">Mitarbeiterkarte</div>
<div class="r" style="left:37px;top:691px;width:1247px;height:1px;background:#f0f0f0"></div>
<div class="r" style="left:141px;top:664px;width:1px;height:27px;background:#f0f0f0"></div>
<div class="r" style="left:491px;top:664px;width:1px;height:27px;background:#f0f0f0"></div>
<div class="r" style="left:754px;top:664px;width:1px;height:27px;background:#f0f0f0"></div>
<div class="t" style="left:-463.00px;width:600px;text-align:right;top:665.98px;font-size:23.77px;font-weight:normal;color:#000;transform:scaleX(0.7951);transform-origin:100% 0;-webkit-text-stroke:0.4px #fff">13</div>
<div class="t" style="left:148.48px;top:665.98px;font-size:23.77px;font-weight:normal;color:#000;transform:scaleX(0.8020);transform-origin:0 0;-webkit-text-stroke:0.4px #fff">KORBINIAN</div>
<div class="t" style="left:499.99px;top:665.98px;font-size:23.77px;font-weight:normal;color:#000;transform:scaleX(0.7951);transform-origin:0 0;-webkit-text-stroke:0.4px #fff">MC00000032</div>
<div class="t" style="left:762.32px;top:665.98px;font-size:23.77px;font-weight:normal;color:#000;transform:scaleX(0.7805);transform-origin:0 0;-webkit-text-stroke:0.4px #fff">Mitarbeiterkarte</div>
<div class="r" style="left:37px;top:719px;width:1247px;height:1px;background:#f0f0f0"></div>
<div class="r" style="left:141px;top:692px;width:1px;height:27px;background:#f0f0f0"></div>
<div class="r" style="left:491px;top:692px;width:1px;height:27px;background:#f0f0f0"></div>
<div class="r" style="left:754px;top:692px;width:1px;height:27px;background:#f0f0f0"></div>
<div class="t" style="left:-463.00px;width:600px;text-align:right;top:693.98px;font-size:23.77px;font-weight:normal;color:#000;transform:scaleX(0.7951);transform-origin:100% 0;-webkit-text-stroke:0.4px #fff">23</div>
<div class="t" style="left:148.48px;top:693.98px;font-size:23.77px;font-weight:normal;color:#000;transform:scaleX(0.8020);transform-origin:0 0;-webkit-text-stroke:0.4px #fff">MARKUS</div>
<div class="t" style="left:499.99px;top:693.98px;font-size:23.77px;font-weight:normal;color:#000;transform:scaleX(0.7951);transform-origin:0 0;-webkit-text-stroke:0.4px #fff">MC00000031</div>
<div class="t" style="left:762.32px;top:693.98px;font-size:23.77px;font-weight:normal;color:#000;transform:scaleX(0.7805);transform-origin:0 0;-webkit-text-stroke:0.4px #fff">Mitarbeiterkarte</div>
<div class="r" style="left:37px;top:747px;width:1247px;height:1px;background:#f0f0f0"></div>
<div class="r" style="left:141px;top:720px;width:1px;height:27px;background:#f0f0f0"></div>
<div class="r" style="left:491px;top:720px;width:1px;height:27px;background:#f0f0f0"></div>
<div class="r" style="left:754px;top:720px;width:1px;height:27px;background:#f0f0f0"></div>
<div class="t" style="left:-463.00px;width:600px;text-align:right;top:721.98px;font-size:23.77px;font-weight:normal;color:#000;transform:scaleX(0.7951);transform-origin:100% 0;-webkit-text-stroke:0.4px #fff">12</div>
<div class="t" style="left:148.48px;top:721.98px;font-size:23.77px;font-weight:normal;color:#000;transform:scaleX(0.8020);transform-origin:0 0;-webkit-text-stroke:0.4px #fff">MARTIN</div>
<div class="t" style="left:499.99px;top:721.98px;font-size:23.77px;font-weight:normal;color:#000;transform:scaleX(0.7951);transform-origin:0 0;-webkit-text-stroke:0.4px #fff">MC00000020</div>
<div class="t" style="left:762.32px;top:721.98px;font-size:23.77px;font-weight:normal;color:#000;transform:scaleX(0.7805);transform-origin:0 0;-webkit-text-stroke:0.4px #fff">Mitarbeiterkarte</div>
<div class="r" style="left:37px;top:775px;width:1247px;height:1px;background:#f0f0f0"></div>
<div class="r" style="left:141px;top:748px;width:1px;height:27px;background:#f0f0f0"></div>
<div class="r" style="left:491px;top:748px;width:1px;height:27px;background:#f0f0f0"></div>
<div class="r" style="left:754px;top:748px;width:1px;height:27px;background:#f0f0f0"></div>
<div class="t" style="left:-463.00px;width:600px;text-align:right;top:749.98px;font-size:23.77px;font-weight:normal;color:#000;transform:scaleX(0.7951);transform-origin:100% 0;-webkit-text-stroke:0.4px #fff">12</div>
<div class="t" style="left:148.48px;top:749.98px;font-size:23.77px;font-weight:normal;color:#000;transform:scaleX(0.8020);transform-origin:0 0;-webkit-text-stroke:0.4px #fff">MARTIN</div>
<div class="t" style="left:499.99px;top:749.98px;font-size:23.77px;font-weight:normal;color:#000;transform:scaleX(0.7951);transform-origin:0 0;-webkit-text-stroke:0.4px #fff">MC00000021</div>
<div class="t" style="left:762.32px;top:749.98px;font-size:23.77px;font-weight:normal;color:#000;transform:scaleX(0.7805);transform-origin:0 0;-webkit-text-stroke:0.4px #fff">Mitarbeiterkarte</div>
<div class="r" style="left:37px;top:803px;width:1247px;height:1px;background:#f0f0f0"></div>
<div class="r" style="left:141px;top:776px;width:1px;height:27px;background:#f0f0f0"></div>
<div class="r" style="left:491px;top:776px;width:1px;height:27px;background:#f0f0f0"></div>
<div class="r" style="left:754px;top:776px;width:1px;height:27px;background:#f0f0f0"></div>
<div class="t" style="left:-463.38px;width:600px;text-align:right;top:777.98px;font-size:23.77px;font-weight:normal;color:#000;transform:scaleX(0.7951);transform-origin:100% 0;-webkit-text-stroke:0.4px #fff">14</div>
<div class="t" style="left:148.48px;top:777.98px;font-size:23.77px;font-weight:normal;color:#000;transform:scaleX(0.8020);transform-origin:0 0;-webkit-text-stroke:0.4px #fff">MAXIMILIAN</div>
<div class="t" style="left:499.99px;top:777.98px;font-size:23.77px;font-weight:normal;color:#000;transform:scaleX(0.7951);transform-origin:0 0;-webkit-text-stroke:0.4px #fff">MC00000025</div>
<div class="t" style="left:762.32px;top:777.98px;font-size:23.77px;font-weight:normal;color:#000;transform:scaleX(0.7805);transform-origin:0 0;-webkit-text-stroke:0.4px #fff">Mitarbeiterkarte</div>
<div class="r" style="left:37px;top:831px;width:1247px;height:1px;background:#f0f0f0"></div>
<div class="r" style="left:141px;top:804px;width:1px;height:27px;background:#f0f0f0"></div>
<div class="r" style="left:491px;top:804px;width:1px;height:27px;background:#f0f0f0"></div>
<div class="r" style="left:754px;top:804px;width:1px;height:27px;background:#f0f0f0"></div>
<div class="t" style="left:-463.38px;width:600px;text-align:right;top:805.98px;font-size:23.77px;font-weight:normal;color:#000;transform:scaleX(0.7951);transform-origin:100% 0;-webkit-text-stroke:0.4px #fff">14</div>
<div class="t" style="left:148.48px;top:805.98px;font-size:23.77px;font-weight:normal;color:#000;transform:scaleX(0.8020);transform-origin:0 0;-webkit-text-stroke:0.4px #fff">MAXIMILIAN</div>
<div class="t" style="left:499.99px;top:805.98px;font-size:23.77px;font-weight:normal;color:#000;transform:scaleX(0.7951);transform-origin:0 0;-webkit-text-stroke:0.4px #fff">MC00000041</div>
<div class="t" style="left:762.32px;top:805.98px;font-size:23.77px;font-weight:normal;color:#000;transform:scaleX(0.7805);transform-origin:0 0;-webkit-text-stroke:0.4px #fff">Mitarbeiterkarte</div>
<div class="r" style="left:37px;top:859px;width:1247px;height:1px;background:#f0f0f0"></div>
<div class="r" style="left:141px;top:832px;width:1px;height:27px;background:#f0f0f0"></div>
<div class="r" style="left:491px;top:832px;width:1px;height:27px;background:#f0f0f0"></div>
<div class="r" style="left:754px;top:832px;width:1px;height:27px;background:#f0f0f0"></div>
<div class="t" style="left:-463.00px;width:600px;text-align:right;top:833.98px;font-size:23.77px;font-weight:normal;color:#000;transform:scaleX(0.7951);transform-origin:100% 0;-webkit-text-stroke:0.4px #fff">19</div>
<div class="t" style="left:148.48px;top:833.98px;font-size:23.77px;font-weight:normal;color:#000;transform:scaleX(0.8020);transform-origin:0 0;-webkit-text-stroke:0.4px #fff">MELINA</div>
<div class="t" style="left:499.99px;top:833.98px;font-size:23.77px;font-weight:normal;color:#000;transform:scaleX(0.7951);transform-origin:0 0;-webkit-text-stroke:0.4px #fff">MC00000030</div>
<div class="t" style="left:762.32px;top:833.98px;font-size:23.77px;font-weight:normal;color:#000;transform:scaleX(0.7805);transform-origin:0 0;-webkit-text-stroke:0.4px #fff">Mitarbeiterkarte</div>
<div class="r" style="left:37px;top:887px;width:1247px;height:1px;background:#f0f0f0"></div>
<div class="r" style="left:141px;top:860px;width:1px;height:27px;background:#f0f0f0"></div>
<div class="r" style="left:491px;top:860px;width:1px;height:27px;background:#f0f0f0"></div>
<div class="r" style="left:754px;top:860px;width:1px;height:27px;background:#f0f0f0"></div>
<div class="t" style="left:-462.93px;width:600px;text-align:right;top:861.98px;font-size:23.77px;font-weight:normal;color:#000;transform:scaleX(0.7951);transform-origin:100% 0;-webkit-text-stroke:0.4px #fff">3</div>
<div class="t" style="left:148.48px;top:861.98px;font-size:23.77px;font-weight:normal;color:#000;transform:scaleX(0.8020);transform-origin:0 0;-webkit-text-stroke:0.4px #fff">MISCHA</div>
<div class="t" style="left:499.99px;top:861.98px;font-size:23.77px;font-weight:normal;color:#000;transform:scaleX(0.7951);transform-origin:0 0;-webkit-text-stroke:0.4px #fff">MC00000034</div>
<div class="t" style="left:762.32px;top:861.98px;font-size:23.77px;font-weight:normal;color:#000;transform:scaleX(0.7805);transform-origin:0 0;-webkit-text-stroke:0.4px #fff">Mitarbeiterkarte</div>
<div class="r" style="left:37px;top:915px;width:1247px;height:1px;background:#f0f0f0"></div>
<div class="r" style="left:141px;top:888px;width:1px;height:27px;background:#f0f0f0"></div>
<div class="r" style="left:491px;top:888px;width:1px;height:27px;background:#f0f0f0"></div>
<div class="r" style="left:754px;top:888px;width:1px;height:27px;background:#f0f0f0"></div>
<div class="t" style="left:-463.00px;width:600px;text-align:right;top:889.98px;font-size:23.77px;font-weight:normal;color:#000;transform:scaleX(0.7951);transform-origin:100% 0;-webkit-text-stroke:0.4px #fff">16</div>
<div class="t" style="left:148.48px;top:889.98px;font-size:23.77px;font-weight:normal;color:#000;transform:scaleX(0.8020);transform-origin:0 0;-webkit-text-stroke:0.4px #fff">PHILIPPE</div>
<div class="t" style="left:499.99px;top:889.98px;font-size:23.77px;font-weight:normal;color:#000;transform:scaleX(0.7951);transform-origin:0 0;-webkit-text-stroke:0.4px #fff">MC00000027</div>
<div class="t" style="left:762.32px;top:889.98px;font-size:23.77px;font-weight:normal;color:#000;transform:scaleX(0.7805);transform-origin:0 0;-webkit-text-stroke:0.4px #fff">Mitarbeiterkarte</div>
<div class="r" style="left:37px;top:943px;width:1247px;height:1px;background:#f0f0f0"></div>
<div class="r" style="left:141px;top:916px;width:1px;height:27px;background:#f0f0f0"></div>
<div class="r" style="left:491px;top:916px;width:1px;height:27px;background:#f0f0f0"></div>
<div class="r" style="left:754px;top:916px;width:1px;height:27px;background:#f0f0f0"></div>
<div class="t" style="left:-463.00px;width:600px;text-align:right;top:917.98px;font-size:23.77px;font-weight:normal;color:#000;transform:scaleX(0.7951);transform-origin:100% 0;-webkit-text-stroke:0.4px #fff">31</div>
<div class="t" style="left:148.48px;top:917.98px;font-size:23.77px;font-weight:normal;color:#000;transform:scaleX(0.8020);transform-origin:0 0;-webkit-text-stroke:0.4px #fff">ROBERT</div>
<div class="t" style="left:499.99px;top:917.98px;font-size:23.77px;font-weight:normal;color:#000;transform:scaleX(0.7951);transform-origin:0 0;-webkit-text-stroke:0.4px #fff">MC00000044</div>
<div class="t" style="left:762.32px;top:917.98px;font-size:23.77px;font-weight:normal;color:#000;transform:scaleX(0.7805);transform-origin:0 0;-webkit-text-stroke:0.4px #fff">Mitarbeiterkarte</div>
<div class="r" style="left:37px;top:971px;width:1247px;height:1px;background:#f0f0f0"></div>
<div class="r" style="left:141px;top:944px;width:1px;height:27px;background:#f0f0f0"></div>
<div class="r" style="left:491px;top:944px;width:1px;height:27px;background:#f0f0f0"></div>
<div class="r" style="left:754px;top:944px;width:1px;height:27px;background:#f0f0f0"></div>
<div class="t" style="left:-463.00px;width:600px;text-align:right;top:945.98px;font-size:23.77px;font-weight:normal;color:#000;transform:scaleX(0.7951);transform-origin:100% 0;-webkit-text-stroke:0.4px #fff">27</div>
<div class="t" style="left:149.05px;top:945.98px;font-size:23.77px;font-weight:normal;color:#000;transform:scaleX(0.8020);transform-origin:0 0;-webkit-text-stroke:0.4px #fff">SABRINA</div>
<div class="t" style="left:499.99px;top:945.98px;font-size:23.77px;font-weight:normal;color:#000;transform:scaleX(0.7951);transform-origin:0 0;-webkit-text-stroke:0.4px #fff">MC00000037</div>
<div class="t" style="left:762.32px;top:945.98px;font-size:23.77px;font-weight:normal;color:#000;transform:scaleX(0.7805);transform-origin:0 0;-webkit-text-stroke:0.4px #fff">Mitarbeiterkarte</div>
<div class="r" style="left:37px;top:972px;width:104px;height:27px;background:#ffffcc"></div>
<div class="r" style="left:142px;top:972px;width:349px;height:27px;background:#ffffcc"></div>
<div class="r" style="left:492px;top:972px;width:262px;height:27px;background:#ffffcc"></div>
<div class="r" style="left:755px;top:972px;width:529px;height:27px;background:#ffffcc"></div>
<div class="r" style="left:37px;top:999px;width:1247px;height:1px;background:#f0f0f0"></div>
<div class="r" style="left:141px;top:972px;width:1px;height:27px;background:#f0f0f0"></div>
<div class="r" style="left:491px;top:972px;width:1px;height:27px;background:#f0f0f0"></div>
<div class="r" style="left:754px;top:972px;width:1px;height:27px;background:#f0f0f0"></div>
<div class="t" style="left:-463.19px;width:600px;text-align:right;top:973.98px;font-size:23.77px;font-weight:normal;color:#000;transform:scaleX(0.7951);transform-origin:100% 0;-webkit-text-stroke:0.4px #ffffcc">25</div>
<div class="t" style="left:149.05px;top:973.98px;font-size:23.77px;font-weight:normal;color:#000;transform:scaleX(0.8020);transform-origin:0 0;-webkit-text-stroke:0.4px #ffffcc">SANDRA</div>
<div class="t" style="left:499.99px;top:973.98px;font-size:23.77px;font-weight:normal;color:#000;transform:scaleX(0.7951);transform-origin:0 0;-webkit-text-stroke:0.4px #ffffcc">MC00000035</div>
<div class="t" style="left:762.32px;top:973.98px;font-size:23.77px;font-weight:normal;color:#000;transform:scaleX(0.7805);transform-origin:0 0;-webkit-text-stroke:0.4px #ffffcc">Mitarbeiterkarte</div>
<div class="r" style="left:1284px;top:202px;width:32px;height:802px;background:#f0f0f0"></div>
<div class="r" style="left:1287px;top:232px;width:27px;height:532px;background:#cdcdcd"></div>
<svg class="r" style="left:1290px;top:208px" width="22" height="18"><path d="M4.5 14 L10.5 7 L16.5 14" fill="none" stroke="#606060" stroke-width="3"/></svg>
<svg class="r" style="left:1290px;top:980px" width="22" height="18"><path d="M4.5 5 L10.5 12 L16.5 5" fill="none" stroke="#606060" stroke-width="3"/></svg>
<div class="r" style="left:36px;top:1029px;width:1281px;height:90px;border:1px solid #dcdcdc;box-sizing:border-box"></div>
<div class="r" style="left:48px;top:1020px;width:78px;height:14px;background:#fff"></div>
<div class="t" style="left:53.82px;top:1017.83px;font-size:22.17px;font-weight:normal;color:#000;transform:scaleX(0.8800);transform-origin:0 0;-webkit-text-stroke:0.3px #fff">Suchen</div>
<div class="r" style="left:64px;top:1053px;width:925px;height:41px;background:#fff;border:1px solid #b7b8bd;box-sizing:border-box"></div>
<div class="r" style="left:1006px;top:1055px;width:38px;height:37px;background:#e1e1e1;border:1px solid #adadad;box-sizing:border-box"></div>
<div class="r" style="left:1062px;top:1055px;width:38px;height:37px;background:#e1e1e1;border:1px solid #adadad;box-sizing:border-box"></div>
<div class="r" style="left:1118px;top:1055px;width:39px;height:38px;background:#cccccc"></div>
<svg class="r" style="left:1006px;top:1055px" width="151" height="38" viewBox="1006 1055 151 38">
<defs><radialGradient id="glass" cx="0.45" cy="0.4" r="0.6"><stop offset="0" stop-color="#ffffff"/><stop offset="0.7" stop-color="#c4eaf6"/><stop offset="1" stop-color="#8fc8ea"/></radialGradient>
<linearGradient id="hdl" x1="0" y1="0" x2="1" y2="1"><stop offset="0" stop-color="#f6c24a"/><stop offset="1" stop-color="#e05a30"/></linearGradient></defs>
<path d="M1021.5 1076.5 L1013 1085" stroke="url(#hdl)" stroke-width="3.4" stroke-linecap="round"/>
<circle cx="1028.5" cy="1070.2" r="8" fill="url(#glass)" stroke="#8aa8e6" stroke-width="1.2"/>
<path d="M1065.5 1060 H1084 L1077 1067 V1073 H1073.5 V1067 Z" fill="#888" stroke="#000" stroke-width="1.6" stroke-linejoin="round"/>
<rect x="1078" y="1068.5" width="18.5" height="18.5" fill="#b8b8b8"/>
<rect x="1076.5" y="1067" width="17" height="17" fill="#fff" stroke="#333" stroke-width="1.3"/>
<path d="M1080 1075 L1084 1080 L1091 1071" fill="none" stroke="#000" stroke-width="2.6"/>
<path d="M1121 1059 H1133 L1128 1064 V1072 H1125.5 V1064 Z" fill="#a8a8a8"/>
<rect x="1134" y="1069" width="18.5" height="18.5" fill="#aaaaaa"/>
<rect x="1132.5" y="1067.5" width="17.5" height="17.5" fill="#f4f4f4"/>
</svg>
<div class="r" style="left:1179px;top:1062px;width:23px;height:23px;border:2px solid #3c3c3c;box-sizing:border-box"></div>
<svg class="r" style="left:1179px;top:1062px" width="22" height="22"><path d="M4.5 11.5 L9 16 L17.5 6" fill="none" stroke="#555" stroke-width="1.6"/></svg>
<div class="t" style="left:1211.92px;top:1061.66px;font-size:22.61px;font-weight:normal;color:#000;transform:scaleX(0.8753);transform-origin:0 0;-webkit-text-stroke:0.3px #fff">Inaktive</div>
</body></html>
